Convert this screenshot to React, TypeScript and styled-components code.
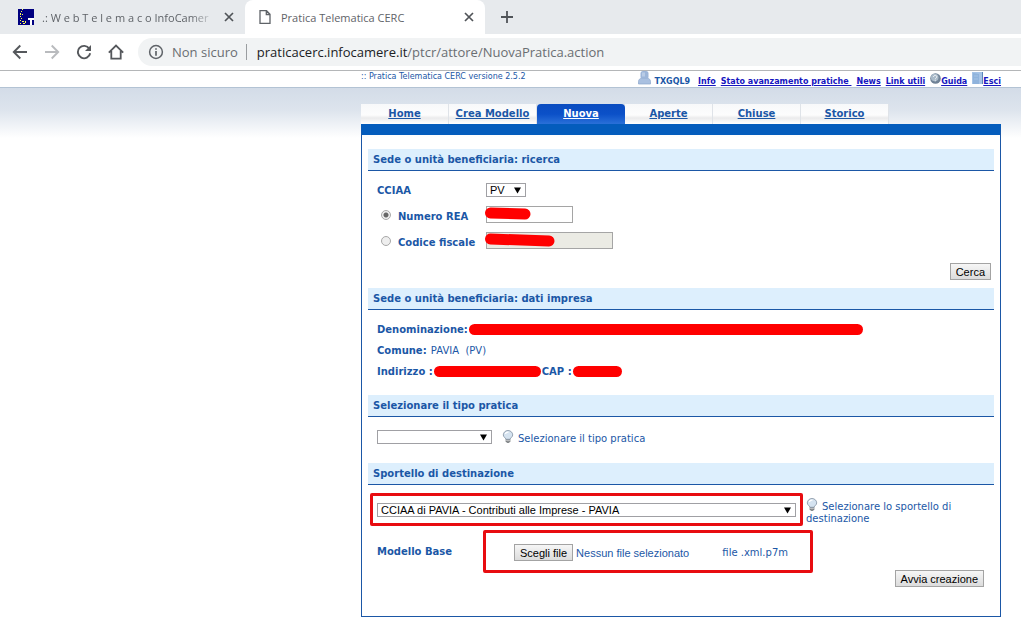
import React from "react";
import styled, { createGlobalStyle, css } from "styled-components";

const blue = "#1b57a6";
const red = "#ff0000";
const frame = "#e80c10";
const verdana = '"DejaVu Sans", Verdana, sans-serif';
const arial = '"Liberation Sans", Arial, sans-serif';
const chromeFont = '"Open Sans", "Segoe UI", sans-serif';

const GlobalStyle = createGlobalStyle`
  * { box-sizing: border-box; }
  body { margin: 0; background: #fff; font-family: ${verdana}; font-size: 10px; color: ${blue}; }
  button, input, select { margin: 0; font-family: ${arial}; font-size: 11px; }
  svg { display: block; flex: none; }
`;

/* Browser frame */

const TabStrip = styled.div`
  display: flex;
  height: 34px;
  background: #e7eaed;
  font-family: ${chromeFont};
  font-size: 11px;
  color: #5f6368;
`;

const BrowserTab = styled.div<{ $active?: boolean }>`
  display: flex;
  align-items: center;
  width: ${(p) => (p.$active ? 240 : 245)}px;
  padding: 0 11px 0 ${(p) => (p.$active ? 12 : 18)}px;
  gap: 8px;
  border-radius: 8px 8px 0 0;
  background: ${(p) => (p.$active ? "#fff" : "transparent")};
`;

const TabTitle = styled.span<{ $fade?: boolean }>`
  flex: 1;
  white-space: nowrap;
  ${(p) =>
    p.$fade &&
    css`
      mask-image: linear-gradient(to right, #000 85%, transparent);
    `}
`;

const IconButton = styled.button`
  display: flex;
  align-items: center;
  justify-content: center;
  padding: 0;
  border: 0;
  background: none;
  color: #5f6368;
`;

const NewTab = styled(IconButton)`
  width: 44px;
`;

const Toolbar = styled.div`
  display: flex;
  align-items: center;
  height: 37px;
  padding-left: 12px;
  gap: 16px;
  border-bottom: 1px solid #b4b6b8;
`;

const AddressBar = styled.div`
  display: flex;
  align-items: center;
  flex: 1;
  height: 28px;
  margin-left: -2px;
  padding-left: 10px;
  gap: 8px;
  border-radius: 14px 0 0 14px;
  background: #f1f3f4;
  font-family: ${chromeFont};
  font-size: 13px;
  white-space: nowrap;
  color: #6a6e72;
`;

const Divider = styled.span`
  width: 1px;
  height: 16px;
  margin-right: 2px;
  background: #9a9da0;
`;

const Host = styled.span`
  color: #202124;
`;

/* Page */

const Page = styled.div`
  background: linear-gradient(#d3dce8, #dde4ed 22px, #fff 50px) 0 17px / 100% 50px no-repeat;
`;

const TopBar = styled.header`
  display: flex;
  justify-content: space-between;
  height: 17px;
  padding: 0 20px 0 361px;
  border-bottom: 1px solid #b3c3d4;
  background: #fff;
  white-space: nowrap;
`;

const Version = styled.span`
  font-size: 8px;
  line-height: 11px;
`;

const UserNav = styled.nav`
  display: flex;
  align-items: flex-start;
  gap: 5px;
  font-size: 8px;
  font-weight: bold;
  line-height: 22px;
`;

const UserName = styled.span`
  display: flex;
  gap: 3px;
  margin-right: 3px;
`;

const NavLink = styled.a`
  display: flex;
  color: #1616c0;
  text-decoration: underline;
  white-space: pre;
`;

const Content = styled.main`
  margin: 16px 20px 8px 361px;
`;

const Menu = styled.nav`
  display: flex;
`;

const MenuTab = styled.a<{ $active?: boolean }>`
  width: 88px;
  height: 20px;
  border-right: 1px solid #dfe3e8;
  background: linear-gradient(#f7f8fa, #fdfdfd 11px, #ebebec 14px, #fff);
  color: ${blue};
  font-size: 10px;
  font-weight: bold;
  line-height: 20px;
  text-align: center;
  ${(p) =>
    p.$active &&
    css`
      border: 0;
      border-radius: 4px 4px 0 0;
      background: linear-gradient(#0a4cc0, #0b50c8 10px, #2a70d8);
      color: #fff;
    `}
`;

const Panel = styled.div`
  padding: 14px 6px 29px;
  border: 1px solid ${blue};
  border-top: 11px solid #045cbc;
`;

const SectionTitle = styled.h2`
  margin: 0;
  padding: 0 5px;
  border-bottom: 1px solid ${blue};
  background: #ddeffd;
  font-size: 10px;
  line-height: 21px;
`;

const Block = styled.div<{ $pad: string }>`
  padding: ${(p) => p.$pad};
`;

const Field = styled.div`
  display: grid;
  grid-template-columns: 109px 1fr;
  align-items: center;
  height: 26px;
`;

const Caption = styled.label`
  display: flex;
  align-items: center;
  gap: 7px;
  font-weight: bold;
`;

const Radio = styled.input`
  appearance: none;
  width: 10px;
  height: 10px;
  margin: 0 0 2px 4px;
  border: 1px solid #a8a8a8;
  border-radius: 50%;
  background: #eee;
  &:checked {
    background: radial-gradient(#666 0 2px, #eee 3px);
  }
`;

const Overlay = styled.span`
  position: relative;
  place-self: start;
  display: block;
  margin-top: 3px;
  & > svg {
    position: absolute;
    top: 0;
    left: -1px;
  }
`;

const TextBox = styled.input<{ $width: number }>`
  display: block;
  width: ${(p) => p.$width}px;
  height: 17px;
  border: 1px solid #a5a5a5;
  &:disabled {
    background: #ebebe4;
  }
`;

const SelectWrap = styled.span<{ $width?: number }>`
  display: grid;
  align-items: center;
  width: ${(p) => (p.$width ? p.$width + "px" : "auto")};
  height: 14px;
  & > * {
    grid-area: 1 / 1;
  }
  & > svg {
    justify-self: end;
    margin-right: 5px;
    pointer-events: none;
  }
`;

const Select = styled.select`
  appearance: none;
  width: 100%;
  height: 14px;
  padding: 0 3px;
  border: 1px solid #a0a0a4;
  border-radius: 0;
  background: #fff;
  color: #000;
  line-height: 12px;
`;

const buttonLook = css`
  height: 17px;
  padding: 0 5px;
  border: 1px solid #a3a3a3;
  border-radius: 0;
  background: linear-gradient(#f6f6f6, #dcdcdc);
  color: #000;
  font-family: ${arial};
  font-size: 11px;
  line-height: 16px;
`;

const PushButton = styled.button`
  ${buttonLook}
`;

const Actions = styled.div<{ $pad: string }>`
  display: flex;
  justify-content: flex-end;
  padding: ${(p) => p.$pad};
`;

const SubmitRow = styled(Actions)`
  margin-top: -3px;
`;

const DataRow = styled.div`
  display: flex;
  align-items: center;
  height: 21px;
  gap: 1px;
  white-space: pre;
`;

const Redaction = styled.span<{ $width: number }>`
  width: ${(p) => p.$width}px;
  height: 11px;
  border-radius: 6px;
  background: ${red};
`;

const TypeRow = styled.div`
  display: flex;
  gap: 10px;
`;

const Hint = styled.span`
  display: flex;
  gap: 4px;
  line-height: 17px;
`;

const DeskRow = styled.div`
  display: flex;
  align-items: flex-start;
  gap: 3px;
`;

const DeskFrame = styled.div`
  width: 433px;
  padding: 7px 4px 6px;
  border: 3px solid ${frame};
  border-radius: 2px;
`;

const DeskHint = styled.p`
  flex: 1;
  max-width: 160px;
  margin: 5px 0 0;
  line-height: 12px;
  & > svg {
    display: inline-block;
    margin-right: 4px;
    vertical-align: -1px;
  }
`;

const ModelRow = styled.div`
  display: grid;
  grid-template-columns: 106px 330px;
  align-items: center;
  margin-top: 4px;
  padding-left: 9px;
`;

const FileFrame = styled.div`
  display: flex;
  align-items: center;
  height: 43px;
  padding: 2px 22px 0 28px;
  border: 3px solid ${frame};
  border-radius: 2px;
`;

const FileInput = styled.input`
  position: absolute;
  width: 1px;
  height: 1px;
  opacity: 0;
`;

const FileButton = styled.label`
  ${buttonLook}
`;

const FileName = styled.span`
  flex: 1;
  padding-left: 3px;
  font-family: ${arial};
  font-size: 11px;
`;

/* Drawings */

const Arrow = () => (
  <svg width="7" height="7" viewBox="0 0 7 7">
    <path d="M0 .5h7L3.500 6.500z" fill="#000" />
  </svg>
);

const Close = () => (
  <svg width="10" height="10" viewBox="0 0 10 10">
    <path d="M1 1l8 8M9 1L1 9" stroke="#505458" strokeWidth="1.7" />
  </svg>
);

const Bulb = () => (
  <svg width="12" height="13" viewBox="0 0 12 13">
    <path d="M4 8.5h4v3L7 12.6H5L4 11.5z" fill="#8c8f92" stroke="#5f6468" strokeWidth=".6" />
    <path d="M6 .5a4.7 4.5 0 0 1 4.7 4.4C10.700 7 8.600 7.500 8 9.300H4C3.400 7.500 1.300 7 1.300 4.900A4.700 4.500 0 0 1 6 .5z" fill="#d5e3f0" stroke="#8a98a8" strokeWidth=".9" />
    <path d="M3.500 4a2.500 2.200 0 0 1 3-1.800" fill="none" stroke="#fff" strokeWidth="1.300" />
    <path d="M4 10.500h4" stroke="#ddd" strokeWidth=".6" />
  </svg>
);

const Favicon = () => (
  <svg width="16" height="16" viewBox="0 0 16 16">
    <path fill="#000080" d="M0 0h16v16H0z" />
    <path
      fill="#ffff50"
      d="M4 0h1v1H4zM3 2h1v1H3zM2 4h1v2H2zM4 5h1v1H4zM2 7h1v1H2zM3 9h1v1H3zM2 11h1v1H2zM4 12h2v1H4zM7 12h1v2H7zM2 14h1v1H2zM5 14h2v1H5z"
    />
    <path fill="#fff" d="M10 9h6v2h-2v5h-2v-5h-2z" />
  </svg>
);

const PageIcon = () => (
  <svg width="16" height="16" viewBox="0 0 16 16">
    <path d="M3 1.700h6.500L13 5.300v9H3z M9.300 1.700v3.800H13" fill="none" stroke="#5f6368" strokeWidth="1.300" />
  </svg>
);

const Back = () => (
  <svg width="16" height="16" viewBox="0 0 16 16">
    <path d="M15 8H2M8.300 1.500L1.800 8l6.500 6.500" fill="none" stroke="#55585c" strokeWidth="1.900" />
  </svg>
);

const Forward = () => (
  <svg width="16" height="16" viewBox="0 0 16 16">
    <path d="M1 8h13M7.700 1.500L14.200 8l-6.500 6.500" fill="none" stroke="#b9bbbe" strokeWidth="1.900" />
  </svg>
);

const Reload = () => (
  <svg width="16" height="16" viewBox="0 0 16 16">
    <path d="M13.300 4.700A6.200 6.200 0 1 0 14.200 9.300" fill="none" stroke="#55585c" strokeWidth="1.900" />
    <path d="M15 1v6H9z" fill="#55585c" />
  </svg>
);

const HomeIcon = () => (
  <svg width="16" height="16" viewBox="0 0 16 16">
    <path d="M.8 8.600L8 1.500l7.200 7.100M3.300 7v7.600h9.400V7" fill="none" stroke="#55585c" strokeWidth="1.800" />
  </svg>
);

const InfoIcon = () => (
  <svg width="16" height="16" viewBox="0 0 16 16">
    <circle cx="8" cy="8" r="6.400" fill="none" stroke="#5f6368" strokeWidth="1.500" />
    <path d="M8 7v4.700M8 4.200v1.600" stroke="#5f6368" strokeWidth="1.700" />
  </svg>
);

const UserIcon = () => (
  <svg width="13" height="14" viewBox="0 0 13 14">
    <path d="M.5 13V10.500C.5 8.500 2 7.500 3.500 7h6c1.500.5 3 1.500 3 3.500V13z" fill="#a9c0e0" stroke="#8ba6cc" strokeWidth=".7" />
    <rect x="2.500" y="0" width="8" height="8" rx="2.500" fill="#9db6d9" />
    <path d="M4 1.500h3v4H4z" fill="#b9cce6" />
  </svg>
);

const HelpIcon = () => (
  <svg width="11" height="14" viewBox="0 0 11 14">
    <circle cx="5.500" cy="7.500" r="5.300" fill="#6f8296" />
    <circle cx="4.700" cy="6.500" r="3.800" fill="#a9bac9" />
    <path d="M3.500 6c0-2.300 3.500-2.100 3.300 0C6.700 7 5.300 7.100 5.300 8.300M5.300 9.300v1" fill="none" stroke="#f2f5f8" strokeWidth="1" />
  </svg>
);

const DoorIcon = () => (
  <svg width="11" height="14" viewBox="0 0 11 14">
    <path d="M0 1h11v12H0z" fill="#a5c3e6" />
    <path d="M1 2l6 1v10H1z" fill="#8fb3dc" />
    <path d="M10.500 1v12" stroke="#5b86bb" />
    <path d="M2 5h4M2 8h4" stroke="#a9c6e6" strokeWidth=".8" />
  </svg>
);

const Scribble = ({ width, y1, y2 }: { width: number; y1: number; y2: number }) => (
  <svg width={width} height="17" viewBox={`0 0 ${width} 17`}>
    <path d={`M5.500 ${y1}L${width - 6} ${y2}`} stroke={red} strokeWidth="11" strokeLinecap="round" />
  </svg>
);

const menu = ["Home", "Crea Modello", "Nuova", "Aperte", "Chiuse", "Storico"];

export default function App() {
  return (
    <>
      <GlobalStyle />
      <TabStrip>
        <BrowserTab>
          <Favicon />
          <TabTitle $fade>.: W e b T e l e m a c o InfoCamer</TabTitle>
          <IconButton aria-label="Chiudi scheda">
            <Close />
          </IconButton>
        </BrowserTab>
        <BrowserTab $active>
          <PageIcon />
          <TabTitle>Pratica Telematica CERC</TabTitle>
          <IconButton aria-label="Chiudi scheda">
            <Close />
          </IconButton>
        </BrowserTab>
        <NewTab aria-label="Nuova scheda">
          <svg width="12" height="12" viewBox="0 0 12 12">
            <path d="M6 0v12M0 6h12" stroke="#505458" strokeWidth="1.800" />
          </svg>
        </NewTab>
      </TabStrip>
      <Toolbar>
        <IconButton aria-label="Indietro"><Back /></IconButton>
        <IconButton aria-label="Avanti"><Forward /></IconButton>
        <IconButton aria-label="Ricarica"><Reload /></IconButton>
        <IconButton aria-label="Pagina iniziale"><HomeIcon /></IconButton>
        <AddressBar>
          <InfoIcon />
          <span>Non sicuro</span>
          <Divider />
          <span>
            <Host>praticacerc.infocamere.it</Host>/ptcr/attore/NuovaPratica.action
          </span>
        </AddressBar>
      </Toolbar>
      <Page>
        <TopBar>
          <Version>:: Pratica Telematica CERC versione 2.5.2</Version>
          <UserNav>
            <UserName><UserIcon />TXGQL9</UserName>
            <NavLink href="#info">Info</NavLink>
            <NavLink href="#stato">Stato avanzamento pratiche </NavLink>
            <NavLink href="#news">News</NavLink>
            <NavLink href="#link">Link utili</NavLink>
            <NavLink href="#guida"><HelpIcon />Guida</NavLink>
            <NavLink href="#esci"><DoorIcon />Esci</NavLink>
          </UserNav>
        </TopBar>
        <Content>
          <Menu>
            {menu.map((name) => (
              <MenuTab key={name} href={`#${name}`} $active={name === "Nuova"}>
                {name}
              </MenuTab>
            ))}
          </Menu>
          <Panel>
            <SectionTitle>Sede o unità beneficiaria: ricerca</SectionTitle>
            <Block $pad="6px 9px 0">
              <Field>
                <Caption htmlFor="cciaa">CCIAA</Caption>
                <SelectWrap $width={40}>
                  <Select id="cciaa"><option>PV</option></Select>
                  <Arrow />
                </SelectWrap>
              </Field>
              <Field>
                <Caption><Radio type="radio" name="ricerca" defaultChecked />Numero REA</Caption>
                <Overlay>
                  <TextBox $width={87} aria-label="Numero REA" />
                  <Scribble width={46} y1={7} y2={8} />
                </Overlay>
              </Field>
              <Field>
                <Caption><Radio type="radio" name="ricerca" />Codice fiscale</Caption>
                <Overlay>
                  <TextBox $width={127} disabled aria-label="Codice fiscale" />
                  <Scribble width={70} y1={7} y2={9} />
                </Overlay>
              </Field>
            </Block>
            <Actions $pad="8px 3px 8px">
              <PushButton>Cerca</PushButton>
            </Actions>
            <SectionTitle>Sede o unità beneficiaria: dati impresa</SectionTitle>
            <Block $pad="9px 9px 13px">
              <DataRow><b>Denominazione:</b><Redaction $width={394} /></DataRow>
              <DataRow><b>Comune:</b>{" PAVIA  (PV)"}</DataRow>
              <DataRow>
                <b>Indirizzo :</b><Redaction $width={107} />
                <b>CAP :</b><Redaction $width={49} />
              </DataRow>
            </Block>
            <SectionTitle>Selezionare il tipo pratica</SectionTitle>
            <Block $pad="13px 9px 16px">
              <TypeRow>
                <SelectWrap $width={115}>
                  <Select aria-label="Tipo pratica"><option /></Select>
                  <Arrow />
                </SelectWrap>
                <Hint><Bulb />Selezionare il tipo pratica</Hint>
              </TypeRow>
            </Block>
            <SectionTitle>Sportello di destinazione</SectionTitle>
            <Block $pad="8px 2px 0">
              <DeskRow>
                <DeskFrame>
                  <SelectWrap>
                    <Select aria-label="Sportello di destinazione">
                      <option>CCIAA di PAVIA - Contributi alle Imprese - PAVIA</option>
                    </Select>
                    <Arrow />
                  </SelectWrap>
                </DeskFrame>
                <DeskHint><Bulb />Selezionare lo sportello di destinazione</DeskHint>
              </DeskRow>
            </Block>
            <ModelRow>
              <Caption htmlFor="modello">Modello Base</Caption>
              <FileFrame>
                <FileInput type="file" id="modello" />
                <FileButton htmlFor="modello">Scegli file</FileButton>
                <FileName>Nessun file selezionato</FileName>
                <span>file .xml.p7m</span>
              </FileFrame>
            </ModelRow>
            <SubmitRow $pad="0 10px 0">
              <PushButton>Avvia creazione</PushButton>
            </SubmitRow>
          </Panel>
        </Content>
      </Page>
    </>
  );
}
